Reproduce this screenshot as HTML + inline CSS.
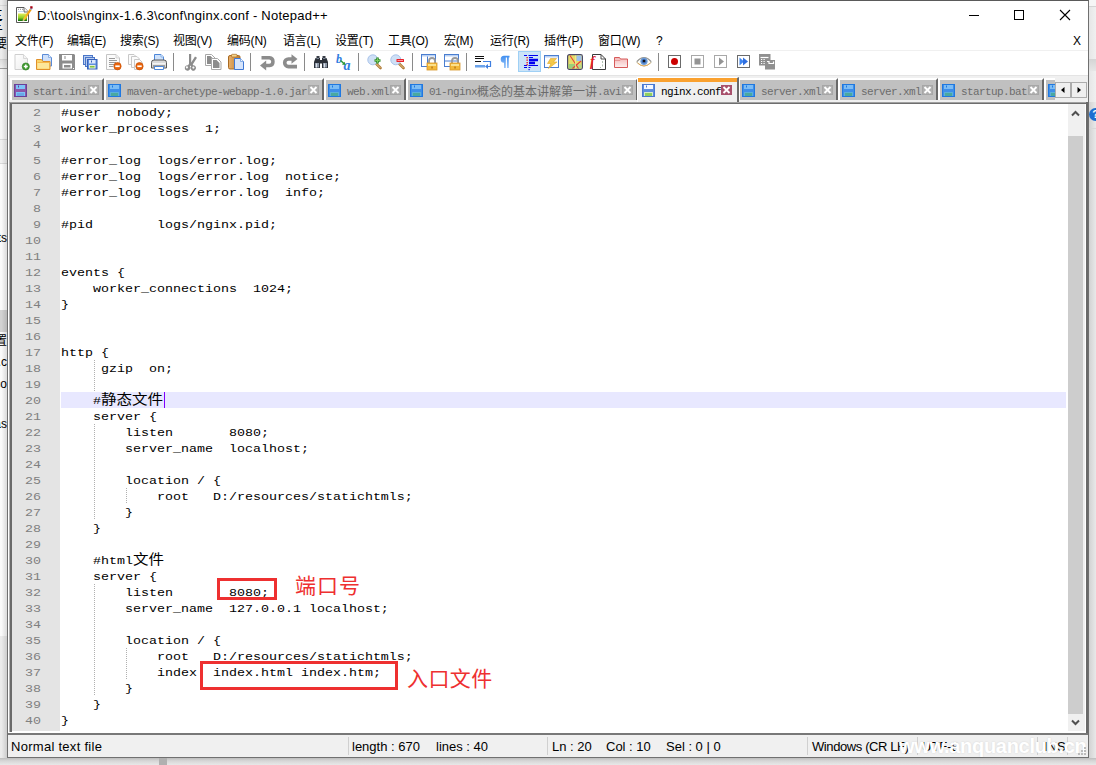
<!DOCTYPE html>
<html lang="zh">
<head>
<meta charset="utf-8">
<title>nginx.conf - Notepad++</title>
<style>
html,body{margin:0;padding:0;}
body{width:1096px;height:765px;overflow:hidden;position:relative;background:#f0f0f0;font-family:"Liberation Sans","Noto Sans CJK SC",sans-serif;}
.abs{position:absolute;}
#bgleft{left:0;top:0;width:7px;height:765px;background:#fafafa;overflow:hidden;}
#bgright{left:1089px;top:0;width:7px;height:765px;background:linear-gradient(to right,#d2d2d2,#e9e9e9);overflow:hidden;}
#bgbottom{left:0;top:758px;width:1096px;height:7px;background:linear-gradient(to bottom,#bdbdbd,#d6d6d6 40%,#e8e8e8);}
#win{left:7px;top:0;width:1082px;height:758px;background:#fff;box-sizing:border-box;border:1px solid #707070;border-top-color:#5a5a5a;}
#title{left:37px;top:8px;font-size:13px;letter-spacing:0.25px;line-height:16px;color:#000;white-space:nowrap;}
.menu{top:33px;font-size:12px;letter-spacing:-0.2px;line-height:16px;color:#000;white-space:nowrap;}
#toolbar{left:8px;top:50px;width:1080px;height:26px;background:#fff;border-top:1px solid #f0f0f0;border-bottom:1px solid #e4e4e4;box-sizing:border-box;}
#tabbar{left:8px;top:76px;width:1080px;height:26px;background:#f0f0f0;}
.tab{top:78px;height:22px;background:#c0c0c0;box-sizing:border-box;border-left:2px solid #fff;border-top:2px solid #fff;border-right:2px solid #686868;font-family:"Liberation Mono","Noto Sans CJK SC",monospace;font-size:11px;letter-spacing:-0.6px;color:#6c6c6c;white-space:nowrap;line-height:14px;}
.tab.act{top:77px;height:25px;background:#f0f0f0;color:#000;border-top:1px solid #fff;border-left:1px solid #fff;border-right:2px solid #6a6a6a;}
.tab.act:before{content:"";position:absolute;left:0;top:0;right:0;height:4px;background:#faa12f;}
.tab span.t{position:absolute;left:21px;top:5px;}
.tab.act span.t{left:23px;top:7px;}
.tab span.t i{font-style:normal;font-size:12px;letter-spacing:0;position:relative;top:1px;}
.tab svg.fl{position:absolute;left:2px;top:4px;}
.tab.act svg.fl{left:4px;top:6px;}
.tab .cl{position:absolute;right:3px;top:5px;width:11px;height:10px;background:#b0b0b0;box-sizing:border-box;border:1px solid #a6a6a6;}
.tab.act .cl{background:#a8506c;border-color:#a8506c;top:7px;right:5px;}
#editor{left:9px;top:102px;width:1077px;height:630px;background:#fff;box-sizing:border-box;border-left:3px solid #6a6a6a;border-top:2px solid #6e6e6e;}
#edl{left:9px;top:102px;width:1px;height:630px;background:#b4b4b4;}
#edt{left:9px;top:102px;width:1077px;height:1px;background:#a0a0a0;}
#margin{left:12px;top:104px;width:48px;height:627px;background:#e4e4e4;}
.ln{left:11px;width:26.1px;text-align:right;font-family:"Liberation Mono",monospace;font-size:11.6px;line-height:16px;height:16px;color:#808080;transform:scaleX(1.1494);transform-origin:0 0;margin-top:1px;}
.cl0{left:61px;font-family:"Liberation Mono","Noto Sans CJK SC",monospace;font-size:11.6px;line-height:16px;height:16px;color:#000;white-space:pre;transform:scaleX(1.1494);transform-origin:0 0;margin-top:1px;}
#curline{left:61px;top:392px;width:1005px;height:16px;background:#e8e8ff;}
#vscroll{left:1068px;top:104px;width:17px;height:627px;background:#f0f0f0;}
#redge{left:1086px;top:102px;width:2px;height:632px;background:#6a6a6a;}
#thumb{left:1068px;top:136px;width:15px;height:578px;background:#cdcdcd;}
#status{left:8px;top:733px;width:1080px;height:24px;background:#f0f0f0;border-top:2px solid #787878;box-sizing:border-box;}
.st{top:739px;font-size:13px;line-height:16px;color:#000;white-space:nowrap;}
.sep{top:737px;width:1px;height:18px;background:#d0d0d0;}
.rbox{border:3px solid #ee3030;box-sizing:border-box;}
.rtxt{color:#ee3030;font-size:21px;line-height:24px;font-family:"Liberation Sans","Noto Sans CJK SC",sans-serif;white-space:nowrap;}
.guide{width:1px;background-image:linear-gradient(to bottom,#b0b0b0 50%,transparent 50%);background-size:1px 2px;}
.cj{font-size:13.5px;letter-spacing:0;line-height:16px;}
#bgleft div{position:absolute;}
#bgleft .tx{right:0;font-size:12px;line-height:14px;color:#000;white-space:nowrap;}
.wc{top:0;width:46px;height:30px;}
</style>
</head>
<body>
<div id="bgleft" class="abs">
<div style="left:0;top:0;width:7px;height:59px;background:#ececec"></div>
<div style="left:0;top:5px;width:7px;height:1px;background:#d8d8d8"></div>
<div style="left:0;top:59px;width:7px;height:1px;background:#d2d2d2"></div>
<div style="left:0;top:60px;width:7px;height:8px;background:linear-gradient(to bottom,#dedede,#eeeeee)"></div>
<div style="left:0;top:68px;width:7px;height:1px;background:#9c9c9c"></div>
<div style="left:0;top:69px;width:7px;height:70px;background:#f5f5f5"></div>
<div style="left:0;top:139px;width:7px;height:25px;background:#f0f0f0;border-top:1px solid #d8d8d8;border-bottom:1px solid #d8d8d8;box-sizing:border-box"></div>
<div style="left:0;top:310px;width:7px;height:22px;background:#d2d2d2"></div>
<div style="left:0;top:636px;width:7px;height:129px;background:#ebebeb"></div>
<div style="left:0;top:0;width:7px;height:765px;background:linear-gradient(to right,rgba(0,0,0,0) 20%,rgba(0,0,0,.13))"></div>
<div class="tx" style="top:9px;right:4px;letter-spacing:0">三</div>
<div class="tx" style="top:19px;right:4px">三</div>
<div class="tx" style="top:37px">要</div>
<div class="tx" style="top:231px">ts</div>
<div class="tx" style="top:334px">置</div>
<div class="tx" style="top:355px">s.c</div>
<div class="tx" style="top:377px">eco</div>
<div class="tx" style="top:417px">as</div>
</div>
<div id="bgright" class="abs">
<div class="abs" style="left:0;top:0;width:7px;height:102px;background:linear-gradient(to right,#e6e6e6,#f0f0f0)"></div>
<div class="abs" style="left:0;top:0;width:7px;height:6px;background:#f6f6f6;border-bottom:1px solid #d4d4d4"></div>
<div class="abs" style="left:0;top:59px;width:7px;height:12px;background:linear-gradient(to bottom,#d4d4d4,#e6e6e6)"></div>
<div class="abs" style="left:0;top:128px;width:7px;height:1px;background:#d8d8d8"></div>
<div class="abs" style="left:0;top:108px;width:13px;height:13px;border-radius:7px;background:#1f6fd0;color:#fff;font-size:11px;line-height:13px;font-weight:bold;text-align:center">?</div>
</div>
<div id="bgbottom" class="abs"><div class="abs" style="left:159px;top:0;width:8px;height:7px;background:#b0b0b0"></div></div>
<div id="win" class="abs"></div>

<!-- title bar -->
<div id="title" class="abs">D:\tools\nginx-1.6.3\conf\nginx.conf - Notepad++</div>

<svg class="abs" style="left:15px;top:6px" width="18" height="18" viewBox="0 0 18 18">
<defs><linearGradient id="gnp" x1="0" y1="0" x2="0" y2="1"><stop offset="0" stop-color="#e4ec5a"/><stop offset=".55" stop-color="#8fd028"/><stop offset="1" stop-color="#0a6a08"/></linearGradient>
<linearGradient id="gpc" x1="0" y1="0" x2="1" y2="0"><stop offset="0" stop-color="#ffcf30"/><stop offset="1" stop-color="#e8900a"/></linearGradient></defs>
<path d="M1.500 1.500h7.500l4.500 4.500V16.500H1.500z" fill="#fff" stroke="#585858" stroke-width="1"/>
<path d="M9 1.500v4.500h4.500" fill="#f4f4f4" stroke="#585858" stroke-width=".9"/>
<path d="M3 3.300h1M5 3.300h1M7 3.300h1" stroke="#8a8a8a" stroke-width="1"/>
<path d="M3 5.500h5.500" stroke="#b8d0e8" stroke-width=".8"/>
<rect x="3" y="7.500" width="9" height="7.500" fill="url(#gnp)"/>
<path d="M14.800 2.800l1.800 1.200L9.800 14.200l-1.800 -1.200z" fill="url(#gpc)"/>
<path d="M8 13l1.800 1.200l-2.300 1.300z" fill="#e8c89a"/>
<path d="M14.800 2.800l.8-1.200l1.800 1.200l-.8 1.200z" fill="#8aa8d8"/>
<rect x="15.300" y=".2" width="2.300" height="2.300" fill="#a80010" transform="rotate(8 16.400 1.300)"/>
</svg>
<svg class="abs" style="left:960px;top:0" width="128" height="30" viewBox="0 0 128 30">
<path d="M9 15.500h10" stroke="#000" stroke-width="1"/>
<rect x="54.500" y="10.500" width="9" height="9" fill="none" stroke="#000" stroke-width="1"/>
<path d="M100 10l10 10M110 10l-10 10" stroke="#000" stroke-width="1.100"/>
</svg>
<!-- menu bar -->
<div class="abs menu" style="left:15px">文件(F)</div>
<div class="abs menu" style="left:67px">编辑(E)</div>
<div class="abs menu" style="left:120px">搜索(S)</div>
<div class="abs menu" style="left:173px">视图(V)</div>
<div class="abs menu" style="left:227px">编码(N)</div>
<div class="abs menu" style="left:283px">语言(L)</div>
<div class="abs menu" style="left:335px">设置(T)</div>
<div class="abs menu" style="left:388px">工具(O)</div>
<div class="abs menu" style="left:444px">宏(M)</div>
<div class="abs menu" style="left:490px">运行(R)</div>
<div class="abs menu" style="left:544px">插件(P)</div>
<div class="abs menu" style="left:598px">窗口(W)</div>
<div class="abs menu" style="left:656px">?</div>
<div class="abs menu" style="left:1073px">X</div>

<div id="toolbar" class="abs"></div>
<div id="tabbar" class="abs"></div>
<div class="abs" style="left:518px;top:51px;width:23px;height:21px;box-sizing:border-box;background:#cce4f7;border:1px solid #9fd0f5"></div>
<svg class="abs" style="left:14px;top:54px;overflow:visible" width="16" height="16" viewBox="0 0 16 16"><defs><linearGradient id="gpg" x1="0" y1="0" x2="1" y2="1"><stop offset="0" stop-color="#ffffff"/><stop offset="1" stop-color="#ececec"/></linearGradient></defs>
<path d="M1 .5h8.5l4 4V15.5H1z" fill="url(#gpg)" stroke="#cfcfcf"/>
<path d="M9.5 .5v4h4" fill="#f4f4f4" stroke="#d8d8d8"/>
<circle cx="11.8" cy="12.5" r="3.6" fill="#3f9a2f" stroke="#2c7a20" stroke-width=".6"/>
<path d="M9.8 12.5h4M11.8 10.5v4" stroke="#fff" stroke-width="1.5"/></svg>
<svg class="abs" style="left:36px;top:54px;overflow:visible" width="16" height="16" viewBox="0 0 16 16"><path d="M6.5 .5h6l3 3v8.5h-9z" fill="#cfe0fa" stroke="#5b8bd6"/>
<path d="M12.5 .5v3h3" fill="#eaf2fd" stroke="#7aa3e0" stroke-width=".8"/>
<path d="M.5 15.500V5.500h5l1.500 2h7V15.500z" fill="#fbd56a" stroke="#e0902a"/>
<path d="M1.500 9h11.500v5.500H1.500z" fill="#fde79a"/>
<path d="M1.500 8.5h11.500" stroke="#f6b94a" stroke-width="1"/></svg>
<svg class="abs" style="left:59px;top:54px;overflow:visible" width="16" height="16" viewBox="0 0 16 16"><path d="M0 0h15l1 1v15H0z" fill="#8c8c8c"/>
<rect x="3" y="1" width="10" height="5.500" fill="#fff"/>
<rect x="5.500" y="2" width="1" height="3" fill="#8c8c8c"/>
<rect x="3.500" y="9.500" width="9.500" height="5" fill="#fff"/>
<rect x="5" y="11" width="6.500" height="2.500" fill="#8c8c8c"/>
<rect x="14" y="14" width="1" height="1" fill="#fff"/></svg>
<svg class="abs" style="left:83px;top:54px;overflow:visible" width="16" height="16" viewBox="0 0 16 16"><rect x=".5" y="1.500" width="9" height="9" fill="#b9cdf0" stroke="#4a76c8"/>
<rect x="2.500" y="3.500" width="9" height="9" fill="#b9cdf0" stroke="#4a76c8"/>
<rect x="4.500" y="5.500" width="9.500" height="9.500" fill="#5f8ede" stroke="#3560b8"/>
<rect x="6" y="6" width="6.500" height="3.500" fill="#dbe7fb"/>
<rect x="8" y="6.500" width="1" height="2" fill="#3560b8"/>
<rect x="6" y="11" width="6.500" height="3.500" fill="#e8f0d0"/>
<rect x="7" y="12" width="4.500" height="1.500" fill="#7fc241"/></svg>
<svg class="abs" style="left:106px;top:54px;overflow:visible" width="16" height="16" viewBox="0 0 16 16"><path d="M.5 .5h9.500l3.500 3.500V15.500H.5z" fill="#fbfbfb" stroke="#c4c4c4"/>
<path d="M10 .5v3.500h3.500" fill="#f0f0f0" stroke="#cfcfcf" stroke-width=".8"/>
<path d="M3 4.500h6M3 6.500h8M3 8.500h7M3 10.500h5M3 12.500h4" stroke="#9a9a9a" stroke-width="1"/>
<circle cx="11.500" cy="12.200" r="3.700" fill="#e8640c" stroke="#c24a00" stroke-width=".6"/>
<rect x="9.300" y="11.400" width="4.400" height="1.700" fill="#fff"/></svg>
<svg class="abs" style="left:128px;top:54px;overflow:visible" width="16" height="16" viewBox="0 0 16 16"><path d="M.5 .5h5.500l2.500 2.500V10.500H.5z" fill="#fbfbfb" stroke="#c8c8c8"/>
<path d="M3.500 2.500h5.500l2.500 2.500V13.500H3.500z" fill="#fbfbfb" stroke="#c8c8c8"/>
<path d="M6.500 5.500h5l2.500 2.500V15.500H6.500z" fill="#fbfbfb" stroke="#c8c8c8"/>
<circle cx="11.500" cy="12.200" r="3.700" fill="#e8640c" stroke="#c24a00" stroke-width=".6"/>
<rect x="9.300" y="11.400" width="4.400" height="1.700" fill="#fff"/></svg>
<svg class="abs" style="left:151px;top:54px;overflow:visible" width="16" height="16" viewBox="0 0 16 16"><path d="M3.500 .5h6.500l2.500 2.500v5h-9z" fill="#cfe2fb" stroke="#4d86d8"/>
<path d="M10 .5v2.500h2.500" fill="#eef5fe" stroke="#7aa8e6" stroke-width=".8"/>
<path d="M.5 8.500q0-2.500 2.500-2.500h10q2.500 0 2.500 2.500v5.500H.5z" fill="#d9d9d9" stroke="#5a5a5a"/>
<path d="M1.500 9h13v1.500h-13z" fill="#f4f4f4"/>
<path d="M2 11h12v2.500H2z" fill="#9c9c9c"/>
<path d="M3.500 12.500h9v3h-9z" fill="#fff" stroke="#4d86d8"/></svg>
<div class="abs" style="left:173px;top:53px;width:1px;height:18px;background:#8a8a8a"></div>
<svg class="abs" style="left:183px;top:54px;overflow:visible" width="16" height="16" viewBox="0 0 16 16"><path d="M6 0h2.200v8.500l3.800-6l2 1.300l-4.300 6.700l.5 .8a2.700 2.700 0 1 1-2 1l-.6-.9l-.7 1a2.800 2.800 0 1 1-1.900-1.200l1-1.500z" fill="#8c8c8c"/>
<circle cx="3.900" cy="13.400" r="1.100" fill="#fcfcfc"/>
<circle cx="10.400" cy="13.600" r="1.100" fill="#fcfcfc"/></svg>
<svg class="abs" style="left:205px;top:54px;overflow:visible" width="16" height="16" viewBox="0 0 16 16"><path d="M.5 .5h6l3.500 3.500V11.500H.5z" fill="#fff" stroke="#a8a8a8"/>
<path d="M2 2h3.500l3 3V10H2z" fill="#8c8c8c"/>
<path d="M6.500 4.500h6l3.500 3.500V15.500H6.500z" fill="#fff" stroke="#a8a8a8"/>
<path d="M8 6h3.500l3 3V14H8z" fill="#8c8c8c"/></svg>
<svg class="abs" style="left:228px;top:54px;overflow:visible" width="16" height="16" viewBox="0 0 16 16"><defs><linearGradient id="gcb" x1="0" y1="0" x2="1" y2="0"><stop offset="0" stop-color="#e9b06a"/><stop offset="1" stop-color="#b97a30"/></linearGradient></defs>
<rect x=".5" y="1.500" width="11.500" height="13.500" rx="1.500" fill="url(#gcb)" stroke="#a86a22"/>
<rect x="3.500" y=".3" width="5.500" height="2.700" rx=".8" fill="#f6d58a" stroke="#a86a22" stroke-width=".7"/>
<path d="M6.500 4.500h6l3 3V15.500h-9z" fill="#d6e4fb" stroke="#3f78d4"/>
<path d="M12.500 4.500v3h3" fill="#f0f6ff" stroke="#6b9ae0" stroke-width=".8"/></svg>
<div class="abs" style="left:250px;top:53px;width:1px;height:18px;background:#8a8a8a"></div>
<svg class="abs" style="left:260px;top:54px;overflow:visible" width="16" height="16" viewBox="0 0 16 16"><path d="M1.500 3.750H9.500A3.900 3.900 0 0 1 9.500 11.500H6" fill="none" stroke="#8c8c8c" stroke-width="3.500"/>
<path d="M0 11.500L6.200 6.500v10z" fill="#8c8c8c"/></svg>
<svg class="abs" style="left:283px;top:54px;overflow:visible" width="16" height="16" viewBox="0 0 16 16"><path d="M9 5H5.500A3.800 3.800 0 0 0 5.500 12.600H14" fill="none" stroke="#8c8c8c" stroke-width="3.600"/>
<path d="M14.500 5L8.500 .3v9.400z" fill="#8c8c8c"/></svg>
<div class="abs" style="left:304px;top:53px;width:1px;height:18px;background:#8a8a8a"></div>
<svg class="abs" style="left:314px;top:54px;overflow:visible" width="16" height="16" viewBox="0 0 16 16"><path d="M2.500 2h3v2h-3zM8.500 2h3v2h-3z" fill="#3a3f48"/>
<path d="M1.500 4h4.500v2h2V4h4.500l1.500 4v6H8V9.500H6V14H0V8z" fill="#2b3038"/>
<rect x="1" y="9" width="4" height="4.500" fill="#8d98a8"/>
<rect x="9" y="9" width="4" height="4.500" fill="#8d98a8"/>
<rect x="2" y="9.500" width="1" height="4" fill="#dfe4ec"/>
<rect x="10" y="9.500" width="1" height="4" fill="#dfe4ec"/>
<path d="M2.500 4.500h2.500M9 4.500h2.500" stroke="#7c8796" stroke-width="1"/></svg>
<svg class="abs" style="left:336px;top:54px;overflow:visible" width="16" height="16" viewBox="0 0 16 16"><text x="0" y="8.500" font-family="Liberation Serif,serif" font-style="italic" font-weight="bold" font-size="12" fill="#2f7de0">b</text>
<text x="7.500" y="15.500" font-family="Liberation Serif,serif" font-style="italic" font-weight="bold" font-size="14" fill="#2f7de0">a</text>
<path d="M4.500 6.500l4 3.500" stroke="#2f9a3a" stroke-width="1.600"/>
<path d="M9.500 11l-3.600-.6l2.800-2.700z" fill="#2f9a3a"/></svg>
<div class="abs" style="left:358px;top:53px;width:1px;height:18px;background:#8a8a8a"></div>
<svg class="abs" style="left:367px;top:54px;overflow:visible" width="16" height="16" viewBox="0 0 16 16"><path d="M9 9.500l4.500 4.500" stroke="#b07a36" stroke-width="2.600" stroke-linecap="round"/>
<path d="M9.300 9.800l4 4" stroke="#e6c38e" stroke-width="1" stroke-linecap="round"/>
<circle cx="5.800" cy="5.800" r="5" fill="#cfe0f6" stroke="#a9c3ea" stroke-width="1"/>
<path d="M10.500 3.500v6M7.500 6.500h6" stroke="#2f8a2a" stroke-width="2.600"/>
<path d="M10.500 4.300v4.400M8.300 6.500h4.400" stroke="#7ccf62" stroke-width="1"/></svg>
<svg class="abs" style="left:390px;top:54px;overflow:visible" width="16" height="16" viewBox="0 0 16 16"><path d="M9 9.500l4.500 4.500" stroke="#b07a36" stroke-width="2.600" stroke-linecap="round"/>
<path d="M9.300 9.800l4 4" stroke="#e6c38e" stroke-width="1" stroke-linecap="round"/>
<circle cx="5.800" cy="5.800" r="5" fill="#cfe0f6" stroke="#a9c3ea" stroke-width="1"/>
<rect x="6.500" y="5" width="7.500" height="3" rx=".5" fill="#e8212a"/>
<rect x="7.500" y="6" width="5.500" height="1" fill="#ff9aa0"/></svg>
<div class="abs" style="left:412px;top:53px;width:1px;height:18px;background:#8a8a8a"></div>
<svg class="abs" style="left:421px;top:54px;overflow:visible" width="16" height="16" viewBox="0 0 16 16"><rect x=".5" y=".5" width="14" height="12" fill="#fff" stroke="#4a7ed0"/>
<rect x="1" y="1" width="13" height="1.500" fill="#b9d0f2"/>
<path d="M6.500 2.500v10" stroke="#4a7ed0"/>

<path d="M8 9.5v-2.500a3 3 0 0 1 6 0v2.500" fill="none" stroke="#9a9a9a" stroke-width="1.800"/>
<rect x="6" y="9" width="10" height="7" fill="#f3b93a" stroke="#d8962a" stroke-width=".8"/>
<rect x="7" y="10" width="8" height="2" fill="#fbe08a"/>
<rect x="10.3" y="12.5" width="1.500" height="2" fill="#b87a1a"/></svg>
<svg class="abs" style="left:444px;top:54px;overflow:visible" width="16" height="16" viewBox="0 0 16 16"><rect x=".5" y=".5" width="14" height="12" fill="#fff" stroke="#4a7ed0"/>
<rect x="1" y="1" width="13" height="1.500" fill="#b9d0f2"/>
<path d="M.5 7h14" stroke="#4a7ed0"/>

<path d="M8 9.5v-2.500a3 3 0 0 1 6 0v2.500" fill="none" stroke="#9a9a9a" stroke-width="1.800"/>
<rect x="6" y="9" width="10" height="7" fill="#f3b93a" stroke="#d8962a" stroke-width=".8"/>
<rect x="7" y="10" width="8" height="2" fill="#fbe08a"/>
<rect x="10.3" y="12.5" width="1.500" height="2" fill="#b87a1a"/></svg>
<div class="abs" style="left:466px;top:53px;width:1px;height:18px;background:#8a8a8a"></div>
<svg class="abs" style="left:474px;top:54px;overflow:visible" width="16" height="16" viewBox="0 0 16 16"><path d="M1 2.500h9M1 4.500h9M1 7.500h6" stroke="#111" stroke-width="1"/>
<rect x="1" y="11" width="10" height="2.500" fill="#6aa2ea"/>
<path d="M9 7.500h7.500v5H13" fill="none" stroke="#3f7fe0" stroke-width="1.200"/>
<path d="M14 10v5l-3-2.500z" fill="#3f7fe0"/></svg>
<svg class="abs" style="left:499px;top:54px;overflow:visible" width="16" height="16" viewBox="0 0 16 16"><defs><linearGradient id="gpl" x1="0" y1="0" x2="0" y2="1"><stop offset="0" stop-color="#3f8ef0"/><stop offset="1" stop-color="#9cc6f8"/></linearGradient></defs>
<path d="M5 1.700h5.500v1.800H9.800V14H8V3.500H6.800V14H5V8.700Q1.700 8.700 1.700 5.200Q1.700 1.700 5 1.700z" fill="url(#gpl)"/></svg>
<svg class="abs" style="left:522px;top:54px;overflow:visible" width="16" height="16" viewBox="0 0 16 16"><path d="M2 1.500h3M6.500 1.500H16M7 3.500h4M2 11.500h3M6.500 11.500H16M2 13.500h3M6.500 13.500h2" stroke="#0000f0" stroke-width="1.200"/>
<path d="M7 6h9M7 9h6" stroke="#0000f0" stroke-width="2.400"/>
<rect x="6.500" y="15" width="1.200" height="1.200" fill="#0000f0"/>
<rect x="4.500" y="3" width="1.300" height="1.300" fill="#f01010"/><rect x="4.500" y="5.500" width="1.300" height="1.300" fill="#f01010"/><rect x="4.500" y="8" width="1.300" height="1.300" fill="#f01010"/><rect x="4.500" y="10" width="1.300" height="1.300" fill="#f01010"/></svg>
<svg class="abs" style="left:544px;top:54px;overflow:visible" width="16" height="16" viewBox="0 0 16 16"><rect x=".5" y="1.500" width="14" height="12" fill="#fff" stroke="#4a7ed0"/>
<rect x="1" y="2" width="13" height="1.500" fill="#b9d0f2"/>
<path d="M6.500 4.500h6L9.500 8h3.500L4.500 14.500L7 9.500H3.500z" fill="#f4c84a" stroke="#e0a82a" stroke-width=".6"/></svg>
<svg class="abs" style="left:567px;top:54px;overflow:visible" width="16" height="16" viewBox="0 0 16 16"><rect x=".6" y=".6" width="14.800" height="14.800" rx="1.800" fill="#e6dc6a" stroke="#4a4868" stroke-width="1.200"/>
<rect x="9.500" y="1.500" width="5" height="5.500" fill="#9cc0ee"/>
<rect x="1.500" y="10" width="7" height="4.500" fill="#9ccf7a"/>
<rect x="10" y="10.500" width="4.500" height="4" fill="#b6d88a"/>
<path d="M3 1.500l8.500 13M14 7L5.500 14.500" stroke="#e8403a" stroke-width="1.100"/>
<path d="M8.500 1.500v13" stroke="#f4ec9a" stroke-width=".8"/></svg>
<svg class="abs" style="left:590px;top:54px;overflow:visible" width="16" height="16" viewBox="0 0 16 16"><path d="M2.500 .5h8.500l4.500 4.500V15.500H2.500z" fill="#fff" stroke="#3c3c3c"/>
<path d="M11 .5v4.500h4.500" fill="none" stroke="#3c3c3c" stroke-width=".9"/>
<path d="M12.500 7v2M12.500 10.500v2M10 13.500h1" stroke="#9ab09a" stroke-width=".8"/>
<text x="0" y="12" font-family="Liberation Serif,serif" font-style="italic" font-weight="bold" font-size="14" fill="#e0202a">f</text></svg>
<svg class="abs" style="left:614px;top:54px;overflow:visible" width="16" height="16" viewBox="0 0 16 16"><defs><linearGradient id="gfd" x1="0" y1="0" x2="0" y2="1"><stop offset="0" stop-color="#f3b6b6"/><stop offset="1" stop-color="#fdf0f0"/></linearGradient></defs>
<path d="M.5 13.500V3.500h5l1 1.500h7v8.500z" fill="url(#gfd)" stroke="#d65a5a"/>
<path d="M1 6.500h5l1-1h6" fill="none" stroke="#e48a8a" stroke-width=".8"/></svg>
<svg class="abs" style="left:636px;top:54px;overflow:visible" width="16" height="16" viewBox="0 0 16 16"><path d="M.5 8Q8 -1 15.500 8Q8 16 .5 8z" fill="#fdfdf6" stroke="#b9b9a8" stroke-width="1"/>
<path d="M1 7.500Q8 -.5 15 7.500" fill="none" stroke="#9a9a9a" stroke-width="1.200"/>
<path d="M1.500 9Q8 15 14.500 9" fill="none" stroke="#e0a85a" stroke-width="1"/>
<circle cx="8" cy="7.300" r="3.600" fill="#6a9ad8"/>
<circle cx="8" cy="7.300" r="2.200" fill="#3f6fb8"/>
<circle cx="8" cy="7" r="1.300" fill="#101018"/></svg>
<div class="abs" style="left:658px;top:53px;width:1px;height:18px;background:#8a8a8a"></div>
<svg class="abs" style="left:668px;top:54px;overflow:visible" width="16" height="16" viewBox="0 0 16 16"><rect x=".5" y="1.500" width="12" height="12" fill="#fff" stroke="#6a6a6a"/>
<circle cx="6.500" cy="7.500" r="3.500" fill="#cc0000"/></svg>
<svg class="abs" style="left:691px;top:54px;overflow:visible" width="16" height="16" viewBox="0 0 16 16"><rect x=".5" y="1.500" width="12" height="12" fill="#fff" stroke="#a8a8a8"/>
<rect x="3.500" y="4.500" width="6" height="6" fill="#949494"/></svg>
<svg class="abs" style="left:714px;top:54px;overflow:visible" width="16" height="16" viewBox="0 0 16 16"><rect x=".5" y="1.500" width="12" height="12" fill="#fff" stroke="#a8a8a8"/>
<path d="M5 3.500l5 4l-5 4z" fill="#949494"/></svg>
<svg class="abs" style="left:737px;top:54px;overflow:visible" width="16" height="16" viewBox="0 0 16 16"><rect x=".5" y="1.500" width="12" height="12" fill="#fff" stroke="#6a6a6a"/>
<path d="M2.500 3.500l4.500 4l-4.500 4z" fill="#3f86f0"/>
<path d="M6 3.500l5 4l-5 4z" fill="#2f6fe0"/></svg>
<svg class="abs" style="left:759px;top:54px;overflow:visible" width="16" height="16" viewBox="0 0 16 16"><rect x="0" y="0" width="11.500" height="11.500" fill="#909090"/>
<rect x="6" y="6" width="10" height="9.500" fill="#909090"/>
<path d="M1.500 3.500h8" stroke="#fff" stroke-width="1.200"/>
<path d="M2 5.500h1.200M4.500 5.500h1.200M2 7.500h1.200M4.500 7.500h1.200M2 9.500h1.200M4.500 9.500h1.200" stroke="#fff" stroke-width="1.200"/>
<path d="M8 7.500h2v2h4.500v-2" fill="none" stroke="#fff" stroke-width="1.200"/></svg>
<div class="abs tab" style="left:10px;width:94px"><svg class="fl" width="13" height="13" viewBox="0 0 13 13"><rect x="0" y="0" width="13" height="13" fill="#6a3f98"/><rect x="1" y="1" width="11" height="11" fill="#8a58a8"/><rect x="2" y="1" width="9" height="4" fill="#7cc4f8"/><rect x="4" y="1.500" width="1" height="2" fill="#6a3f98"/><rect x="2" y="8" width="9" height="4" fill="#7cc4f8"/><rect x="3" y="9" width="7" height="3" fill="#6aa8e8"/></svg><span class="t">start.ini</span><div class="cl"><svg width="9" height="8" viewBox="0 0 9 8" style="display:block"><path d="M1.500 1l6 6M7.500 1l-6 6" stroke="#fff" stroke-width="1.900"/></svg></div></div>
<div class="abs tab" style="left:104px;width:220px"><svg class="fl" width="13" height="13" viewBox="0 0 13 13"><rect x="0" y="0" width="13" height="13" fill="#1f78e0"/><rect x="1" y="1" width="11" height="11" fill="#3f8ee8"/><rect x="2" y="1" width="9" height="4" fill="#7cbcf4"/><rect x="4" y="1.500" width="1" height="2" fill="#1f78e0"/><rect x="2" y="8" width="9" height="4" fill="#5ab0d8"/><rect x="3" y="9" width="7" height="3" fill="#4aa8a0"/></svg><span class="t">maven-archetype-webapp-1.0.jar</span><div class="cl"><svg width="9" height="8" viewBox="0 0 9 8" style="display:block"><path d="M1.500 1l6 6M7.500 1l-6 6" stroke="#fff" stroke-width="1.900"/></svg></div></div>
<div class="abs tab" style="left:324px;width:82px"><svg class="fl" width="13" height="13" viewBox="0 0 13 13"><rect x="0" y="0" width="13" height="13" fill="#1f78e0"/><rect x="1" y="1" width="11" height="11" fill="#3f8ee8"/><rect x="2" y="1" width="9" height="4" fill="#7cbcf4"/><rect x="4" y="1.500" width="1" height="2" fill="#1f78e0"/><rect x="2" y="8" width="9" height="4" fill="#5ab0d8"/><rect x="3" y="9" width="7" height="3" fill="#4aa8a0"/></svg><span class="t">web.xml</span><div class="cl"><svg width="9" height="8" viewBox="0 0 9 8" style="display:block"><path d="M1.500 1l6 6M7.500 1l-6 6" stroke="#fff" stroke-width="1.900"/></svg></div></div>
<div class="abs tab" style="left:406px;width:232px"><svg class="fl" width="13" height="13" viewBox="0 0 13 13"><rect x="0" y="0" width="13" height="13" fill="#1f78e0"/><rect x="1" y="1" width="11" height="11" fill="#3f8ee8"/><rect x="2" y="1" width="9" height="4" fill="#7cbcf4"/><rect x="4" y="1.500" width="1" height="2" fill="#1f78e0"/><rect x="2" y="8" width="9" height="4" fill="#5ab0d8"/><rect x="3" y="9" width="7" height="3" fill="#4aa8a0"/></svg><span class="t">01-nginx<i>概念的基本讲解第一讲</i>.avi</span><div class="cl"><svg width="9" height="8" viewBox="0 0 9 8" style="display:block"><path d="M1.500 1l6 6M7.500 1l-6 6" stroke="#fff" stroke-width="1.900"/></svg></div></div>
<div class="abs tab" style="left:738px;width:100px"><svg class="fl" width="13" height="13" viewBox="0 0 13 13"><rect x="0" y="0" width="13" height="13" fill="#1f78e0"/><rect x="1" y="1" width="11" height="11" fill="#3f8ee8"/><rect x="2" y="1" width="9" height="4" fill="#7cbcf4"/><rect x="4" y="1.500" width="1" height="2" fill="#1f78e0"/><rect x="2" y="8" width="9" height="4" fill="#5ab0d8"/><rect x="3" y="9" width="7" height="3" fill="#4aa8a0"/></svg><span class="t">server.xml</span><div class="cl"><svg width="9" height="8" viewBox="0 0 9 8" style="display:block"><path d="M1.500 1l6 6M7.500 1l-6 6" stroke="#fff" stroke-width="1.900"/></svg></div></div>
<div class="abs tab" style="left:838px;width:100px"><svg class="fl" width="13" height="13" viewBox="0 0 13 13"><rect x="0" y="0" width="13" height="13" fill="#1f78e0"/><rect x="1" y="1" width="11" height="11" fill="#3f8ee8"/><rect x="2" y="1" width="9" height="4" fill="#7cbcf4"/><rect x="4" y="1.500" width="1" height="2" fill="#1f78e0"/><rect x="2" y="8" width="9" height="4" fill="#5ab0d8"/><rect x="3" y="9" width="7" height="3" fill="#4aa8a0"/></svg><span class="t">server.xml</span><div class="cl"><svg width="9" height="8" viewBox="0 0 9 8" style="display:block"><path d="M1.500 1l6 6M7.500 1l-6 6" stroke="#fff" stroke-width="1.900"/></svg></div></div>
<div class="abs tab" style="left:938px;width:106px"><svg class="fl" width="13" height="13" viewBox="0 0 13 13"><rect x="0" y="0" width="13" height="13" fill="#1f78e0"/><rect x="1" y="1" width="11" height="11" fill="#3f8ee8"/><rect x="2" y="1" width="9" height="4" fill="#7cbcf4"/><rect x="4" y="1.500" width="1" height="2" fill="#1f78e0"/><rect x="2" y="8" width="9" height="4" fill="#5ab0d8"/><rect x="3" y="9" width="7" height="3" fill="#4aa8a0"/></svg><span class="t">startup.bat</span><div class="cl"><svg width="9" height="8" viewBox="0 0 9 8" style="display:block"><path d="M1.500 1l6 6M7.500 1l-6 6" stroke="#fff" stroke-width="1.900"/></svg></div></div>
<div class="abs tab" style="left:1044px;width:11px;border-right:none;overflow:hidden"><svg class="fl" width="13" height="13" viewBox="0 0 13 13"><rect x="0" y="0" width="13" height="13" fill="#1f78e0"/><rect x="1" y="1" width="11" height="11" fill="#3f8ee8"/><rect x="2" y="1" width="9" height="4" fill="#7cbcf4"/><rect x="4" y="1.500" width="1" height="2" fill="#1f78e0"/><rect x="2" y="8" width="9" height="4" fill="#5ab0d8"/><rect x="3" y="9" width="7" height="3" fill="#4aa8a0"/></svg></div>
<div class="abs tab act" style="left:637px;width:102px"><svg class="fl" width="13" height="13" viewBox="0 0 13 13"><rect x="0" y="0" width="13" height="13" fill="#4a78d0"/><rect x="1" y="1" width="11" height="11" fill="#5f8ede"/><rect x="2" y="1" width="9" height="4" fill="#f4f8ff"/><rect x="4" y="1.500" width="1" height="2" fill="#4a78d0"/><rect x="2" y="8" width="9" height="4" fill="#d8ecc8"/><rect x="3" y="9" width="7" height="3" fill="#8fd060"/></svg><span class="t">nginx.conf</span><div class="cl"><svg width="9" height="8" viewBox="0 0 9 8" style="display:block"><path d="M1.500 1l6 6M7.500 1l-6 6" stroke="#fff" stroke-width="1.900"/></svg></div></div>
<div class="abs" style="left:1055px;top:82px;width:16px;height:16px;box-sizing:border-box;background:#f0f0f0;border:1px solid #adadad"><svg width="14" height="14" viewBox="0 0 14 14" style="display:block"><path d="M8.500 4v6l-3.500-3z" fill="#000"/></svg></div>
<div class="abs" style="left:1071px;top:82px;width:16px;height:16px;box-sizing:border-box;background:#f0f0f0;border:1px solid #adadad"><svg width="14" height="14" viewBox="0 0 14 14" style="display:block"><path d="M5.500 4v6l3.500-3z" fill="#000"/></svg></div>

<div id="editor" class="abs"></div>
<div id="edl" class="abs"></div><div id="edt" class="abs"></div>
<div id="margin" class="abs"></div>
<div id="curline" class="abs"></div>
<div class="abs ln" style="top:104px">2</div>
<div class="abs cl0" style="top:104px">#user  nobody;</div>
<div class="abs ln" style="top:120px">3</div>
<div class="abs cl0" style="top:120px">worker_processes  1;</div>
<div class="abs ln" style="top:136px">4</div>
<div class="abs ln" style="top:152px">5</div>
<div class="abs cl0" style="top:152px">#error_log  logs/error.log;</div>
<div class="abs ln" style="top:168px">6</div>
<div class="abs cl0" style="top:168px">#error_log  logs/error.log  notice;</div>
<div class="abs ln" style="top:184px">7</div>
<div class="abs cl0" style="top:184px">#error_log  logs/error.log  info;</div>
<div class="abs ln" style="top:200px">8</div>
<div class="abs ln" style="top:216px">9</div>
<div class="abs cl0" style="top:216px">#pid        logs/nginx.pid;</div>
<div class="abs ln" style="top:232px">10</div>
<div class="abs ln" style="top:248px">11</div>
<div class="abs ln" style="top:264px">12</div>
<div class="abs cl0" style="top:264px">events {</div>
<div class="abs ln" style="top:280px">13</div>
<div class="abs cl0" style="top:280px">    worker_connections  1024;</div>
<div class="abs ln" style="top:296px">14</div>
<div class="abs cl0" style="top:296px">}</div>
<div class="abs ln" style="top:312px">15</div>
<div class="abs ln" style="top:328px">16</div>
<div class="abs ln" style="top:344px">17</div>
<div class="abs cl0" style="top:344px">http {</div>
<div class="abs ln" style="top:360px">18</div>
<div class="abs cl0" style="top:360px">     gzip  on;</div>
<div class="abs ln" style="top:376px">19</div>
<div class="abs ln" style="top:392px">20</div>
<div class="abs cl0" style="top:392px">    #<span class="cj">静态文件</span></div>
<div class="abs ln" style="top:408px">21</div>
<div class="abs cl0" style="top:408px">    server {</div>
<div class="abs ln" style="top:424px">22</div>
<div class="abs cl0" style="top:424px">        listen       8080;</div>
<div class="abs ln" style="top:440px">23</div>
<div class="abs cl0" style="top:440px">        server_name  localhost;</div>
<div class="abs ln" style="top:456px">24</div>
<div class="abs ln" style="top:472px">25</div>
<div class="abs cl0" style="top:472px">        location / {</div>
<div class="abs ln" style="top:488px">26</div>
<div class="abs cl0" style="top:488px">            root   D:/resources/statichtmls;</div>
<div class="abs ln" style="top:504px">27</div>
<div class="abs cl0" style="top:504px">        }</div>
<div class="abs ln" style="top:520px">28</div>
<div class="abs cl0" style="top:520px">    }</div>
<div class="abs ln" style="top:536px">29</div>
<div class="abs ln" style="top:552px">30</div>
<div class="abs cl0" style="top:552px">    #html<span class="cj">文件</span></div>
<div class="abs ln" style="top:568px">31</div>
<div class="abs cl0" style="top:568px">    server {</div>
<div class="abs ln" style="top:584px">32</div>
<div class="abs cl0" style="top:584px">        listen       8080;</div>
<div class="abs ln" style="top:600px">33</div>
<div class="abs cl0" style="top:600px">        server_name  127.0.0.1 localhost;</div>
<div class="abs ln" style="top:616px">34</div>
<div class="abs ln" style="top:632px">35</div>
<div class="abs cl0" style="top:632px">        location / {</div>
<div class="abs ln" style="top:648px">36</div>
<div class="abs cl0" style="top:648px">            root   D:/resources/statichtmls;</div>
<div class="abs ln" style="top:664px">37</div>
<div class="abs cl0" style="top:664px">            index  index.html index.htm;</div>
<div class="abs ln" style="top:680px">38</div>
<div class="abs cl0" style="top:680px">        }</div>
<div class="abs ln" style="top:696px">39</div>
<div class="abs cl0" style="top:696px">    }</div>
<div class="abs ln" style="top:712px">40</div>
<div class="abs cl0" style="top:712px">}</div>
<div class="abs guide" style="left:94px;top:360px;height:32px"></div>
<div class="abs guide" style="left:94px;top:424px;height:96px"></div>
<div class="abs guide" style="left:126px;top:488px;height:16px"></div>
<div class="abs guide" style="left:94px;top:584px;height:112px"></div>
<div class="abs guide" style="left:126px;top:648px;height:32px"></div>
<div class="abs" style="left:164px;top:392px;width:1px;height:16px;background:#8000ff"></div>
<div class="abs rbox" style="left:217px;top:578px;width:60px;height:22px"></div>
<div class="abs rbox" style="left:200px;top:661px;width:198px;height:29px"></div>
<div class="abs rtxt" style="left:295px;top:574px;letter-spacing:1px">端口号</div>
<div class="abs rtxt" style="left:407px;top:667px;letter-spacing:0.4px">入口文件</div>
<div id="vscroll" class="abs"></div>
<div id="thumb" class="abs"></div>
<div id="redge" class="abs"></div>

<div id="status" class="abs"></div>
<svg class="abs" style="left:1068px;top:105px" width="16" height="16" viewBox="0 0 16 16"><path d="M4 10.500L7.500 7L11 10.500" fill="none" stroke="#505050" stroke-width="2"/></svg>
<svg class="abs" style="left:1068px;top:714px" width="16" height="16" viewBox="0 0 16 16"><path d="M4 6.500L7.500 10L11 6.500" fill="none" stroke="#505050" stroke-width="2"/></svg>
<div class="abs st" style="left:11px;letter-spacing:0.28px">Normal text file</div>
<div class="abs st" style="left:352px">length : 670</div>
<div class="abs st" style="left:436px">lines : 40</div>
<div class="abs st" style="left:552px">Ln : 20</div>
<div class="abs st" style="left:606px">Col : 10</div>
<div class="abs st" style="left:666px">Sel : 0 | 0</div>
<div class="abs st" style="left:812px;letter-spacing:-0.4px">Windows (CR LF)</div>
<div class="abs st" style="left:922px">UTF-8</div>
<div class="abs st" style="left:1044px">INS</div>
<div class="abs sep" style="left:348px"></div>
<div class="abs sep" style="left:547px"></div>
<div class="abs sep" style="left:807px"></div>
<div class="abs sep" style="left:917px"></div>
<div class="abs sep" style="left:1037px"></div>
<div class="abs sep" style="left:1067px"></div>
<div class="abs" id="wm" style="left:899px;top:734px;font-size:20px;line-height:24px;font-weight:bold;color:#fff;letter-spacing:-0.3px;white-space:nowrap;text-shadow:0 0 2px rgba(0,0,0,.12)">www.anquanclub.cn</div>
<svg class="abs" id="grip" style="left:1076px;top:745px" width="11" height="11" viewBox="0 0 11 11"><g fill="#bcbcbc"><rect x="8" y="2" width="2" height="2"/><rect x="5" y="5" width="2" height="2"/><rect x="8" y="5" width="2" height="2"/><rect x="2" y="8" width="2" height="2"/><rect x="5" y="8" width="2" height="2"/><rect x="8" y="8" width="2" height="2"/></g></svg>
</body>
</html>
